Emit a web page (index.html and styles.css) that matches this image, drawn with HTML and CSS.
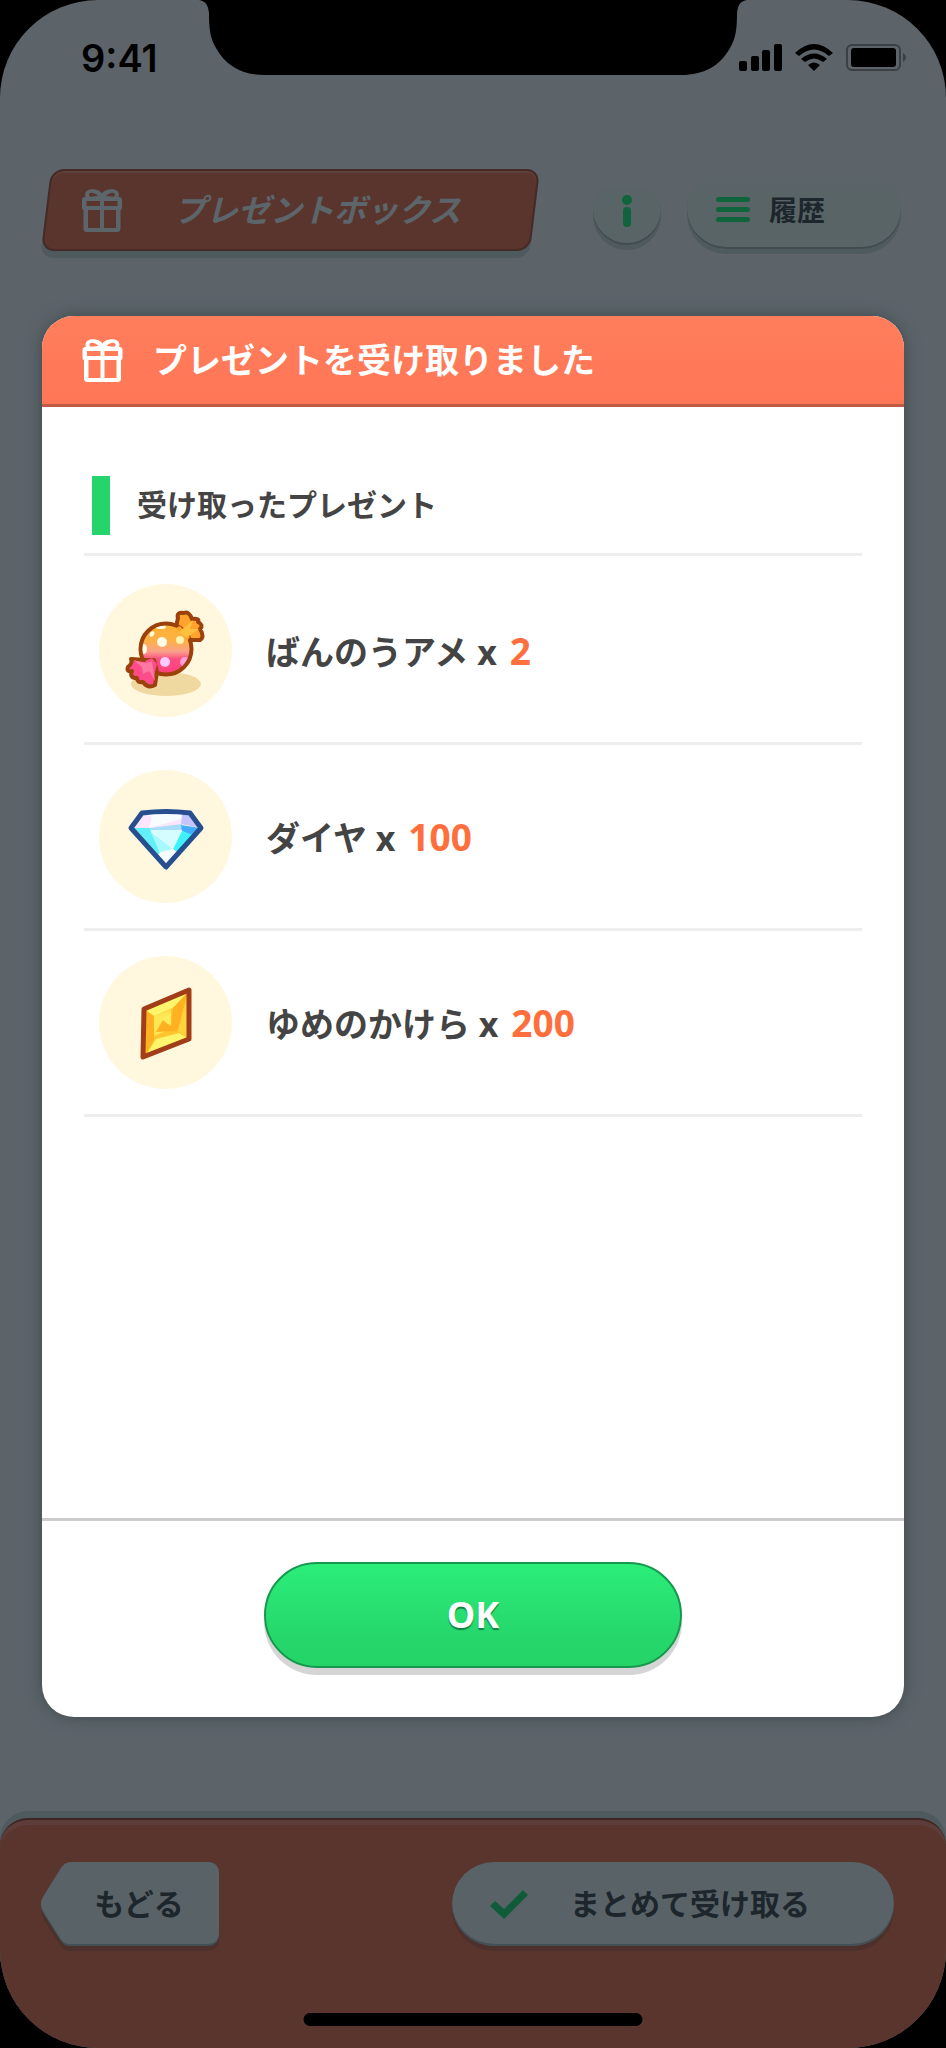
FILE: index.html
```html
<!DOCTYPE html>
<html lang="ja">
<head>
<meta charset="utf-8">
<meta name="viewport" content="width=device-width, initial-scale=1">
<title>プレゼントボックス</title>
<link rel="stylesheet" href="styles.css">
</head>
<body>
<svg class="defs" aria-hidden="true">
  <symbol id="gift" viewBox="0 0 40 43">
    <path fill-rule="evenodd" d="M20 4.500C22 1 29 -.6 33 .8C37 2.200 37.500 5.500 36.500 8H37Q40 8 40 11V18.500Q40 21 38.500 21V39.500Q38.500 43 35 43H5Q1.500 43 1.500 39.500V21Q0 21 0 18.500V11Q0 8 3 8H3.500C2.500 5.500 3 2.200 7 .8C11-.6 18 1 20 4.500ZM16 7C13 4 9 3 7.500 4.500C6.500 5.500 7 7 8 7.800ZM24 7L32 7.800C33 7 33.500 5.500 32.500 4.500C31 3 27 4 24 7ZM4.500 12V17H18V12ZM22 12V17H35.500V12ZM6 21V39H18V21ZM22 21V39H34V21Z"/>
  </symbol>
</svg>
<div class="phone">
  <div class="status">
    <svg class="notch" viewBox="0 0 548 75" aria-hidden="true"><path d="M0 0C6 1 9 4 10 13C10 28 11 38 17 48C27 66 43 75 66 75H482C505 75 521 66 531 48C537 38 538 28 538 13C539 4 542 1 548 0Z"/></svg>
    <time class="clock">9:41</time>
    <svg class="indicators" viewBox="0 0 168 28" aria-label="電波、Wi-Fi、バッテリー">
      <rect y="17" width="8" height="10" rx="2"/><rect x="12" y="12" width="8" height="15" rx="2"/><rect x="23" y="6" width="8" height="21" rx="2"/><rect x="35" width="8" height="27" rx="2"/>
      <path d="M56 9L60 12Q75-1 90 12L94 9Q75-9 56 9ZM62 15L66 18Q75 11 84 18L88 15Q75 4 62 15ZM69 21L75 27L81 21Q75 16 69 21Z"/>
      <rect x="108" y="1" width="53" height="25" rx="5" fill="none" stroke="#3a3f42" stroke-width="2"/><rect x="112" y="4" width="45" height="19" rx="3"/><path d="M164 9Q170 13 164 18Z" fill="#3a3f42"/>
    </svg>
  </div>
  <header class="topbar">
    <h1 class="badge"><svg class="gift"><use href="#gift"/></svg><span>プレゼントボックス</span></h1>
    <button class="info" type="button" aria-label="情報"><svg viewBox="0 0 10 32"><circle cx="5" cy="5" r="5"/><rect x="1" y="12" width="8" height="20" rx="4"/></svg></button>
    <button class="history" type="button"><svg viewBox="0 0 34 26"><rect width="34" height="5" rx="2.500"/><rect y="10" width="34" height="5" rx="2.500"/><rect y="20" width="34" height="5" rx="2.500"/></svg>履歴</button>
  </header>
  <main class="modal" role="dialog" aria-labelledby="title">
    <div class="modal-head"><svg class="gift"><use href="#gift"/></svg><h2 id="title">プレゼントを受け取りました</h2></div>
    <section class="content">
      <h3 class="subhead">受け取ったプレゼント</h3>
      <ul class="items">
        <li>
          <span class="disc"><svg viewBox="0 0 133 133" aria-hidden="true">
            <defs><linearGradient id="ball" x1="0" y1="0" x2="0" y2="1"><stop offset="0" stop-color="#ffb32e"/><stop offset=".35" stop-color="#fdb048"/><stop offset=".55" stop-color="#f9a08a"/><stop offset=".7" stop-color="#fc4d80"/><stop offset="1" stop-color="#ff3f80"/></linearGradient></defs>
            <ellipse cx="67" cy="100" rx="35" ry="12" fill="#f0d9a1"/>
            <g stroke="#9b410b" stroke-width="4" stroke-linejoin="round">
              <path fill="#ffa32d" d="M77 43L79 34Q77 28 85 29Q90 27 93 35Q101 34 99 38Q105 41 101 45Q106 53 101 56L90 56Z"/>
              <circle cx="67" cy="65" r="25.500" fill="url(#ball)"/>
              <path fill="#ff4b8a" d="M47 76L32 75Q34 79 29 83Q27 88 33 87Q30 94 38 94Q38 99 44 98Q49 105 56 101L58 88L55 76Z"/>
            </g>
            <path fill="#ffa32d" d="M77 44L81 42L91 53L88 57Z"/><path fill="#ffbf3f" d="M80 48L94 36L91 45L100 45L87 54Z"/>
            <path fill="#ff4b8a" d="M46 77L53 74L58 80L56 88Z"/><path fill="#ff79a2" d="M34 76L47 79L53 77L56 97L50 87L44 90L43 83Z"/>
            <clipPath id="round"><circle cx="67" cy="65" r="23.500"/></clipPath>
            <g clip-path="url(#round)" fill="#fffbe5"><circle cx="63" cy="58" r="5"/><circle cx="81" cy="56" r="4" fill="#fff3af"/><ellipse cx="62" cy="43" rx="5" ry="2"/><ellipse cx="53" cy="50" rx="2" ry="3" transform="rotate(35 53 50)"/><ellipse cx="45" cy="65" rx="3" ry="5"/><circle cx="66" cy="78" r="5" fill="#ffcaff"/><circle cx="86" cy="78" r="5" fill="#ff9ed8"/></g>
          </svg></span>
          <p>ばんのうアメ x <b>2</b></p>
        </li>
        <li>
          <span class="disc"><svg viewBox="0 0 133 133" aria-hidden="true">
            <path fill="#f7fdff" d="M42 42H91L102 58L67 97L32 58Z"/>
            <path fill="#fae6fa" d="M42 42L53 47L50 58H34ZM51 58L82 49V60Z"/><path fill="#c7c3ff" d="M83 44L91 42L101 58L82 54Z"/>
            <path fill="#a9dcf6" d="M51 58L83 54V61H51Z"/><path fill="#42adff" d="M82 55L101 58L94 66L83 61Z"/>
            <path fill="#62eff7" d="M34 58H51L61 83L57 86Z"/><path fill="#a5f9ff" d="M51 61L74 79L61 82Z"/><path fill="#3ef2fb" d="M83 61L94 65L78 82L74 79Z"/><path fill="#d5fcff" d="M51 60H83L74 79Z"/>
            <path fill="none" stroke="#274f8f" stroke-width="5" stroke-linejoin="round" d="M43 43Q67 40 91 43L102 58L67 97L32 58Z"/>
          </svg></span>
          <p>ダイヤ x <b>100</b></p>
        </li>
        <li>
          <span class="disc"><svg viewBox="0 0 133 133" aria-hidden="true">
            <path fill="#ffc52f" d="M45 53L90 34V83L45 101Z"/><path fill="#fff56c" d="M47 54L89 36L74 52L55 60ZM47 99L57 83L80 77L88 82Z"/><path fill="#ffb121" d="M47 55L55 60V83L47 99ZM74 52L89 36L79 74L72 71Z"/><path fill="#ffd33c" d="M89 36V82L79 75Z"/><path fill="#ffe653" d="M55 60L72 54V73L55 80Z"/><path fill="#ffb022" d="M57 76L64 64L79 75Z"/><path fill="#ffec59" d="M62 63L72 57V70Z"/>
            <path fill="none" stroke="#a13d18" stroke-width="5" stroke-linejoin="round" d="M45 53L90 34V83L44 101Z"/>
          </svg></span>
          <p>ゆめのかけら x <b>200</b></p>
        </li>
      </ul>
    </section>
    <footer class="modal-foot"><button class="ok" type="button">OK</button></footer>
  </main>
  <nav class="bottombar">
    <button class="back" type="button"><svg class="back-shape" viewBox="0 0 178 90" preserveAspectRatio="none" aria-hidden="true"><path fill="#4b302c" d="M28 5H166Q178 5 178 17V77Q178 89 166 89H28Q24 89 20 84L3 58Q-2 48 3 39L19 11Q23 5 28 5Z"/><path fill="#424f54" d="M30 0H166Q178 0 178 12V72Q178 84 166 84H28Q23 84 19 78L2 51Q-2 43 2 35L20 6Q24 0 30 0Z"/><path fill="#596266" d="M30 0H166Q178 0 178 12V70Q178 82 166 82H28Q23 82 19 76L2 49Q-2 42 2 35L20 6Q24 0 30 0Z"/></svg><span>もどる</span></button>
    <button class="receive" type="button"><svg viewBox="0 0 38 29"><path d="M0 16L5 11L14 19L33 0L38 5L14 29Z"/></svg>まとめて受け取る</button>
    <span class="home"></span>
  </nav>
</div>
</body>
</html>
```
FILE: styles.css
```css
* { box-sizing: border-box; }
body { margin: 0; background: #000; font-family: "Noto Sans", "Noto Sans CJK JP", sans-serif; font-weight: 700; }
h1, h2, h3, p, ul { margin: 0; padding: 0; font-size: inherit; font-weight: inherit; }
button { border: 0; padding: 0; font: inherit; line-height: 1; color: #1c262c; cursor: pointer; }
svg { display: block; flex: none; }
.defs { position: absolute; width: 0; height: 0; }

.phone {
  display: flex; flex-direction: column; min-height: 100vh; overflow: hidden;
  border-radius: 98px; background: #5c646a;
}
.status { position: relative; display: flex; justify-content: space-between; align-items: flex-start; height: 169px; padding: 44px 39px 0 81px; }
.notch { position: absolute; top: 0; left: 50%; width: 548px; height: 75px; transform: translateX(-50%); }
.clock { font: 600 38px/28px Inter, sans-serif; }
.indicators { width: 168px; height: 28px; }

.topbar { display: flex; align-items: flex-start; padding: 0 45px 0 42px; height: 147px; }
.badge {
  position: relative; z-index: 0; display: flex; align-items: center; flex: 1; gap: 52px;
  height: 82px; padding: 0 40px; color: #5c666a; font-size: 32px; font-style: italic; line-height: 1; white-space: nowrap;
}
.badge::before {
  content: ""; position: absolute; z-index: -1; inset: 0 4px; border: 2px solid #452a26; border-radius: 13px;
  background: #5a352e; box-shadow: 0 7px #4e5a5e, inset 0 2px #5e3f3a; transform: skewX(-7deg);
}
.gift { width: 40px; height: 43px; fill: currentColor; }
.info, .history { display: flex; align-items: center; background: #596467; background: linear-gradient(#5c646a, #596467 30%); box-shadow: 0 5px #4f5a5e, inset 0 -2px #424b50; }
.info { justify-content: center; width: 68px; height: 68px; margin: 8px 26px 0 54px; border-radius: 50%; }
.info svg { width: 10px; height: 32px; fill: #10643b; }
.history { gap: 19px; width: 214px; height: 78px; margin-top: 2px; padding-left: 29px; border-radius: 39px; font-size: 28px; }
.history svg { width: 34px; height: 26px; fill: #10643b; }

.modal {
  display: flex; flex-direction: column; flex: 1; margin: 0 42px; overflow: hidden;
  border-radius: 32px; background: #fff; box-shadow: 0 0 16px #3f4b4b;
}
.modal-head {
  display: flex; align-items: center; gap: 30px; height: 91px; padding: 0 40px; color: #fff;
  border-bottom: 3px solid #bf5b44; background: linear-gradient(#ff7e5c, #ff7656); font-size: 34px; line-height: 1;
}
.modal-head .gift { width: 41px; }
.content { flex: 1; padding: 56px 42px 0; color: #444; }
.subhead { display: flex; align-items: center; gap: 27px; height: 93px; padding: 0 8px 12px; border-bottom: 3px solid #eee; font-size: 30px; line-height: 1; }
.subhead { padding-top: 6px; }
.subhead::before { content: ""; width: 18px; height: 59px; background: #26d46c; }
.items { padding-top: 3px; list-style: none; font-size: 34px; line-height: 1; }
.items li { display: flex; align-items: center; gap: 34px; height: 186px; padding-left: 15px; border-bottom: 3px solid #eee; }
.disc { width: 133px; height: 133px; border-radius: 50%; background: #fff8df; }
.items b { margin-left: 4px; color: #ff6f3d; font-size: 37px; font-weight: 700; line-height: 1; }
.modal-foot { display: flex; justify-content: center; height: 199px; padding-top: 41px; border-top: 3px solid #ccc; }
.ok {
  width: 418px; height: 106px; border: 2px solid #18984f; border-radius: 53px; color: #fff; font-size: 36px;
  background: linear-gradient(#2bee79, #26d76c 70%, #25d467); box-shadow: 0 7px #d5d5d5; text-shadow: 0 2px 1px #128044;
}

.bottombar {
  position: relative; display: flex; justify-content: space-between; align-items: flex-start; height: 230px; margin-top: 101px;
  padding: 42px 52px 0 41px; border-top: 2px solid #3e2422; border-radius: 28px 28px 0 0; background: #5a352e;
  box-shadow: 0 -7px #4f5a5e, inset 0 5px #5d3d3a; font-size: 30px;
}
.back { position: relative; width: 178px; height: 84px; padding-left: 18px; background: none; }
.back-shape { position: absolute; top: 0; left: 0; width: 178px; height: 90px; }
.back span { position: relative; }
.receive {
  display: flex; align-items: center; gap: 42px; width: 442px; height: 84px; padding-left: 38px; border-radius: 42px;
  background: #596266; box-shadow: 0 5px #4b302c, inset 0 -2px #424f54;
}
.receive svg { width: 38px; height: 29px; fill: #0f5b3a; }
.home { position: absolute; bottom: 22px; left: 50%; width: 339px; height: 13px; border-radius: 7px; background: #000; transform: translateX(-50%); }
```
